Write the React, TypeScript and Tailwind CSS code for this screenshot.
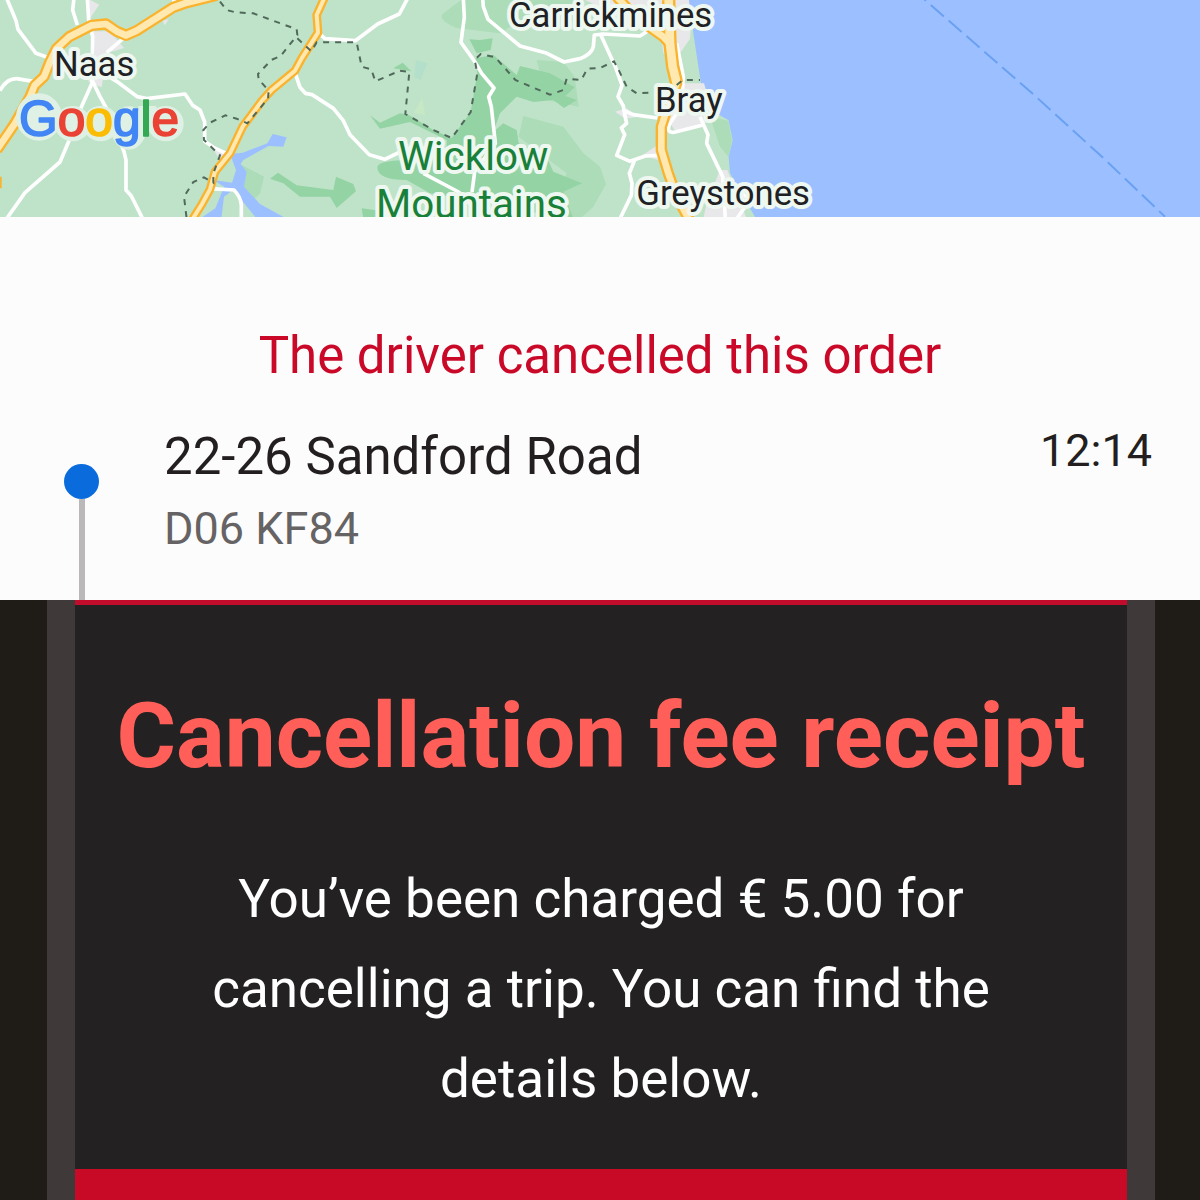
const whiteRoads = [
  'M20 -5 L48 62 L54 88 L108 160 L142 172',
  'M222 -5 L218 30 L232 75',
  'M262 -5 L266 60 L278 110 L276 250 L240 330 L207 422 L180 486 L75 578 L20 656',
  'M376 110 L320 158',
  'M0 272 Q20 235 50 236 L100 244',
  'M276 240 L300 290 L330 345 L372 455 L378 480 L378 570 L394 588 L428 656',
  'M320 226 L350 244 L412 290 L440 296 L555 282 L578 316 L600 330 L614 366 L614 424 L640 442 L692 466',
  'M884 215 L900 262 L916 280 L936 284 L1000 325 L1030 362 L1050 404 L1108 464 L1154 478 L1200 456',
  'M520 10 L524 -5',
  'M632 566 L702 570 Q722 590 724 615 L724 656',
  'M955 98 L975 116 L1066 122 L1133 72 L1198 42 L1223 -5',
  'M1390 -5 L1393 52 L1383 127 L1425 186 L1445 220 L1482 264 L1466 290 L1474 320 L1486 430 L1424 515 L1416 576',
  'M1448 -5 L1450 20 L1464 58 L1560 138 L1636 158 L1692 186 L1740 176 Q1776 162 1780 140 L1783 105 L1810 102 L1920 108 L1945 92',
  'M1270 520 L1376 576 L1410 610 L1420 640',
  'M1800 100 L1846 200 L1866 256 L1854 290 L1870 318 L1874 344 L1880 370 L1864 384 L1874 404 L1850 466 L1890 484 L1936 468 L1980 466',
  'M1872 332 L1900 344 L1972 354',
  'M1905 478 L1888 520 L1896 550 L1894 586 L1860 656',
  'M2030 130 L2050 230 L2044 320 L2010 370 Q1996 402 2026 396 L2112 374',
  'M2100 350 L2124 404 L2120 430 L2168 530 L2176 656',
  'M2180 540 L2250 600 L2210 656',
]

const orangeRoads = [
  { d: 'M-10 450 L45 370 L90 290 L104 256 L132 230 L150 185 L170 145 L208 110 L275 76 L318 72 L350 94 L378 106 L410 92 L520 22 L560 8 L650 -14', w: 26 },
  { d: 'M576 660 L606 612 L630 568 L645 515 L690 460 L728 380 L786 302 L815 270 L885 212 L905 175 L954 98 L950 45 L974 -8', w: 18 },
  { d: 'M1850 -10 L1905 50 L1990 110 L2008 130 L2018 200 L2030 250 L2000 330 L1984 380 L1984 450 L2005 520 L2030 590 L2068 660', w: 26 },
  { d: 'M2006 0 L2010 130 L2018 200 L2030 250', w: 32 },
]

const borders = [
  'M660 5 L680 30 L706 37 L760 40 L890 88 L892 105 L842 168 L814 180 L774 222 L776 238 L806 272 L804 296 L742 370 L710 356 L676 346 L630 368 L610 390 L612 420 L660 466 L640 520 L640 548 L612 532 L580 546 L552 590 L560 656',
  'M892 115 L934 154 L950 127 L1070 127 L1085 200 L1114 208 L1126 244 L1200 212 L1228 216 L1216 342 L1300 390 L1355 414 L1412 336 L1432 220 L1424 180 L1442 162 L1486 172 L1546 240 L1650 284 L1690 270 L1700 236 L1744 240 L1762 206 L1800 204 L1842 184 L1856 210 L1880 260 L1910 280 L1960 278',
  'M2030 255 L2048 240 L2100 240',
]

const towns = [
  'M262 -5 L298 14 L270 55 Z',
  'M280 94 L330 94 L372 144 L320 160 L305 262 L265 245 L284 170 Z',
  'M488 62 L506 58 L494 76 Z',
  'M640 448 L690 458 L664 486 Z',
  'M1745 -5 L2066 -5 L2074 60 L2070 116 L2040 160 L1990 160 L1985 110 Z',
  'M2030 250 L2112 250 L2140 345 L2112 374 L2026 396 L2000 350 Z',
  'M1845 335 L1880 325 L1914 350 L1876 356 Z',
  'M1928 465 L1972 436 L1986 484 Z',
  'M2160 510 L2182 510 L2210 580 L2240 656 L2110 656 L2120 610 Z',
]

const darkGreens = [
  'M1110 346 L1140 368 L1200 340 L1228 346 L1300 390 L1355 414 L1412 336 L1432 220 L1426 175 L1480 165 L1550 225 L1560 198 L1650 220 L1724 262 L1696 288 L1730 300 L1692 324 L1660 300 L1600 306 L1550 290 L1500 340 L1480 395 L1510 370 L1550 390 L1556 430 L1640 470 L1660 515 L1746 550 L1690 575 L1720 656 L1560 630 L1400 600 L1290 580 L1220 540 Q1130 540 1132 500 Q1140 480 1230 480 L1340 470 L1340 420 L1230 366 L1140 386 Z',
  'M1408 118 L1440 120 L1478 115 L1472 150 L1430 160 Z',
  'M810 536 L834 518 L890 556 L1000 570 L1008 530 L1060 552 L1068 574 L1010 624 L990 590 L900 590 L850 550 Z',
  'M1085 625 L1140 632 L1140 656 L1090 656 Z',
  'M1180 205 L1208 188 L1234 214 Z',
]

const labels = [
  { text: 'Naas', x: 162, y: 228, size: 104, fill: '#202124' },
  { text: 'Carrickmines', x: 1527, y: 82, size: 104, fill: '#202124' },
  { text: 'Bray', x: 1965, y: 335, size: 104, fill: '#202124' },
  { text: 'Greystones', x: 1909, y: 614, size: 104, fill: '#202124' },
  { text: 'Wicklow', x: 1194, y: 510, size: 121, fill: '#188038' },
  { text: 'Mountains', x: 1128, y: 654, size: 121, fill: '#188038' },
]

function AreaMap() {
  return (
    <svg
      className="block h-full w-full"
      viewBox="0 0 3600 651"
      preserveAspectRatio="xMinYMin slice"
      role="img"
      aria-label="Map of the coast south of Dublin"
      fontFamily="Roboto, sans-serif"
    >
      <rect width="3600" height="651" fill="#bfe3c8" />

      <g fill="#acdcb8">
        <path d="M1390 -5 L1500 -5 L1740 0 L1760 60 L1700 68 L1560 60 L1500 100 L1370 84 Q1310 60 1330 40 Z" />
        <path d="M1610 180 L1690 186 L1724 230 L1736 320 L1640 300 Z" />
        <path d="M1570 348 L1690 380 L1750 460 L1800 500 L1818 552 L1780 620 L1740 656 L1660 640 L1700 520 L1556 410 Z" />
        <path d="M724 494 L792 530 L780 580 L740 620 L716 560 Z" />
        <path d="M2130 350 L2184 362 L2196 420 L2186 470 L2160 440 Z" />
      </g>
      <g fill="#94d3a4">
        {darkGreens.map((d) => (
          <path key={d} d={d} />
        ))}
      </g>
      <path d="M1266 295 L1276 346 L1242 338 Z" fill="#c7e8c4" />
      <path d="M1248 180 L1282 190 L1262 240 L1242 230 Z" fill="#b3dfcb" />

      <g fill="#9cc0ff">
        <path d="M2065 -5 L3605 -5 L3605 656 L2268 656 L2230 590 L2190 520 L2186 470 L2198 420 L2185 360 L2130 330 L2102 245 L2080 100 Z" />
        <path d="M690 462 L728 458 L802 430 L818 402 L860 412 L850 440 L806 438 L730 480 L722 492 L740 515 L732 560 L780 612 L860 656 L770 656 L700 570 L672 590 L664 656 L600 656 L646 625 L672 560 L640 540 L696 548 L708 510 Z" />
      </g>

      <g fill="#e8e7ea">
        {towns.map((d) => (
          <path key={d} d={d} />
        ))}
      </g>
      <g fill="none" stroke="#ffffff" strokeWidth="11" strokeLinejoin="round">
        {whiteRoads.map((d) => (
          <path key={d} d={d} />
        ))}
      </g>
      <g fill="none" strokeLinejoin="round">
        {orangeRoads.map((road) => (
          <path key={road.d} d={road.d} stroke="#fab32e" strokeWidth={road.w + 8} />
        ))}
        {orangeRoads.map((road) => (
          <path key={road.d} d={road.d} stroke="#ffe9b0" strokeWidth={road.w - 6} />
        ))}
        <path d="M0 530 L0 565" stroke="#fab32e" strokeWidth="10" />
      </g>
      <g fill="none" stroke="#50695b" strokeWidth="6" strokeDasharray="18 18">
        {borders.map((d) => (
          <path key={d} d={d} />
        ))}
      </g>
      <path
        d="M2766 -8 L3100 283 L3310 474 L3495 650"
        fill="none"
        stroke="#6aa0f2"
        strokeWidth="6"
        strokeDasharray="52 19"
        strokeDashoffset="36"
      />

      <g stroke="#eef7f0" strokeWidth="24" strokeLinejoin="round" paintOrder="stroke">
        {labels.map((label) => (
          <text key={label.text} x={label.x} y={label.y} fontSize={label.size} fill={label.fill}>
            {label.text}
          </text>
        ))}
      </g>

      <g strokeLinejoin="round" paintOrder="stroke" fontFamily="Liberation Sans, sans-serif" fontSize="149">
        <g stroke="#dff1e4" strokeWidth="54" fill="#dff1e4" aria-hidden="true">
          <ellipse cx="117" cy="351" rx="42" ry="44" />
          <ellipse cx="218" cy="371" rx="27" ry="26" />
          <ellipse cx="302" cy="371" rx="27" ry="26" />
          <ellipse cx="386" cy="384" rx="26" ry="38" />
          <path d="M442 318 V396" />
          <ellipse cx="497" cy="371" rx="27" ry="26" />
        </g>
        <text x="57" y="408" strokeWidth="5">
          <tspan fill="#4285f4" stroke="#4285f4">G</tspan>
          <tspan fill="#ea4335" stroke="#ea4335">o</tspan>
          <tspan fill="#fbbc05" stroke="#fbbc05">o</tspan>
          <tspan fill="#4285f4" stroke="#4285f4">g</tspan>
          <tspan fill="#34a853" stroke="#34a853">l</tspan>
          <tspan fill="#ea4335" stroke="#ea4335">e</tspan>
        </text>
      </g>
    </svg>
  )
}

function OrderSummary() {
  return (
    <section className="flex h-[383px] flex-col bg-[#fcfcfc] pt-[109px]">
      <h2 className="text-center text-[51px] leading-[60px] text-[#ca0928]">The driver cancelled this order</h2>
      <div className="flex flex-1 pr-12 pl-16">
        <div className="flex w-[35px] shrink-0 flex-col items-center pt-[78px]">
          <span className="size-[35px] shrink-0 rounded-full bg-[#0a6cdc]" />
          <span className="w-[6px] flex-1 bg-[#bab8b9]" />
        </div>
        <div className="ml-[65px] flex-1 pt-[41px]">
          <p className="text-[51px] leading-[60px] text-[#231f20]">22-26 Sandford Road</p>
          <p className="mt-3 text-[45px] leading-[60px] text-[#666364]">D06 KF84</p>
        </div>
        <time className="pt-[35px] text-[45px] leading-[60px] text-[#231f20]">12:14</time>
      </div>
    </section>
  )
}

function FeeReceipt() {
  return (
    <section className="flex min-h-[600px] flex-1 bg-[#1f1c17] pr-[45px] pl-[47px]">
      <div className="flex flex-1 bg-[#3f393a] px-7">
        <div className="flex-1 border-t-5 border-b-31 border-t-[#c10d2b] border-b-[#c80a27] bg-[#242122] text-center">
          <h1 className="pt-[81px] text-[91px] leading-[100px] font-bold text-[#ff5f58]">Cancellation fee receipt</h1>
          <p className="mx-auto mt-[68px] max-w-[820px] text-[53px] leading-[90px] text-white">
            You’ve been charged € 5.00 for cancelling a trip. You can find the details below.
          </p>
        </div>
      </div>
    </section>
  )
}

export default function App() {
  return (
    <main className="flex min-h-screen flex-col font-[Roboto,sans-serif]">
      <div className="h-[217px] overflow-hidden">
        <AreaMap />
      </div>
      <OrderSummary />
      <FeeReceipt />
    </main>
  )
}
